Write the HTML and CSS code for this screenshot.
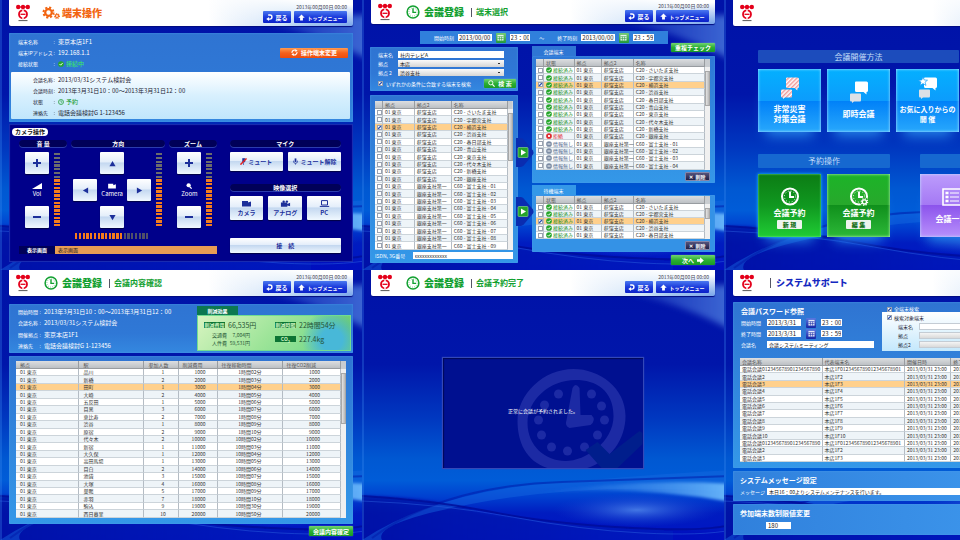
FILE: index.html
```html
<!DOCTYPE html>
<html lang="ja">
<head>
<meta charset="utf-8">
<title>会議予約システム</title>
<link rel="stylesheet" href="styles.css">
</head>
<body>
<svg class="defs" aria-hidden="true">
  <defs>
    <linearGradient id="sky" x1="0" y1="0" x2="0" y2="1">
      <stop offset="0" stop-color="#0012a8"/><stop offset=".35" stop-color="#0016aa"/>
      <stop offset=".55" stop-color="#0038c0"/><stop offset=".7" stop-color="#0058d2"/><stop offset=".78" stop-color="#005cd8"/>
      <stop offset=".84" stop-color="#0040d0"/><stop offset=".9" stop-color="#001cc0"/><stop offset="1" stop-color="#0014c4"/>
    </linearGradient>
    <linearGradient id="beam" x1="0" x2="1"><stop offset="0" stop-color="#2a7ae8" stop-opacity="0"/><stop offset="1" stop-color="#6ab8fa"/></linearGradient>
    <linearGradient id="shade" x1="0" x2="1"><stop offset="0" stop-color="#0010a0" stop-opacity=".8"/><stop offset="1" stop-color="#0012b4" stop-opacity=".2"/></linearGradient>
    <linearGradient id="flare" x1="0" x2="1"><stop offset="0" stop-color="#4a7ee0" stop-opacity="0"/><stop offset="1" stop-color="#5a8ee8" stop-opacity=".7"/></linearGradient>
    <radialGradient id="glow"><stop offset="0" stop-color="#4a80e8" stop-opacity=".9"/><stop offset="1" stop-color="#1040d0" stop-opacity="0"/></radialGradient>
    <filter id="soft"><feGaussianBlur stdDeviation="3"/></filter>
    <filter id="softer"><feGaussianBlur stdDeviation="1.5"/></filter>
  </defs>
  <symbol id="waves" viewBox="0 0 362 270" preserveAspectRatio="none">
    <rect width="362" height="270" fill="url(#sky)"/>
    <path d="M230 18Q300 24 370 60V15Z" fill="url(#flare)" filter="url(#soft)"/>
    <path d="M-6 226Q60 226 110 240T370 262V276H-6Z" fill="url(#shade)" filter="url(#softer)"/>
    <path d="M0 270Q70 224 180 214T370 200V222Q230 212 120 232T20 270Z" fill="#1668e0" opacity=".45"/>
    <path d="M170 224Q270 208 370 214V232Q270 214 170 224Z" fill="url(#beam)" filter="url(#softer)"/>
    <ellipse cx="275" cy="240" rx="84" ry="17" fill="url(#glow)"/>
    <path d="M10 268Q80 216 200 212T370 206" fill="none" stroke="#0018a8" stroke-width="2" opacity=".5"/>
    <path d="M0 226Q70 230 130 242T270 258T370 254" fill="none" stroke="#000c98" stroke-width="2" opacity=".8"/>
    <path d="M0 231Q80 234 150 247T280 263T370 260" fill="none" stroke="#2a60e0" opacity=".5"/>
    <rect width="2" height="270" fill="#3c8cf0" opacity=".3"/>
  </symbol>
  <symbol id="logo" viewBox="0 0 16 18">
    <g fill="#e4001b"><circle cx="3.200" cy="3" r="2.200"/><circle cx="8" cy="3" r="2.200"/><circle cx="12.800" cy="3" r="2.200"/><path d="M3 2.400h10v1.200H3z"/></g>
    <circle cx="8" cy="10.300" r="4" fill="none" stroke="#e4001b" stroke-width="1.800"/>
    <path d="M8 5.400V8.600M8 12V15" stroke="#fff" stroke-width="1.400"/>
    <path d="M5.500 10.300H10.500" stroke="#e4001b" stroke-width="1.300"/>
    <path d="M3.500 16.600h9" stroke="#444" stroke-width=".9"/>
  </symbol>
  <symbol id="gears" viewBox="0 0 18 14">
    <g fill="none" stroke="#f26410"><circle cx="6.500" cy="6.500" r="3.300" stroke-width="2.200"/><circle cx="6.500" cy="6.500" r="5" stroke-width="2" stroke-dasharray="2.100 1.827"/><circle cx="15" cy="10" r="1.500" stroke-width="1.200"/><circle cx="15" cy="10" r="2.400" stroke-width="1.100" stroke-dasharray="1 .885"/></g>
  </symbol>
  <symbol id="clock" viewBox="0 0 14 14">
    <circle cx="7" cy="7" r="5.900" fill="none" stroke="currentColor" stroke-width="1.500"/>
    <circle cx="7" cy="7" r="4.100" fill="none" stroke="currentColor" stroke-width=".7" stroke-dasharray=".7 1.447"/>
    <path d="M7 3.300V7.400H10" fill="none" stroke="currentColor" stroke-width="1.400"/>
  </symbol>
  <symbol id="back" viewBox="0 0 8 8"><path d="M2.500 1.200H4.500A2.300 2.300 0 0 1 4.500 5.800H2.500" fill="none" stroke="#fff" stroke-width="1.600"/><path d="M3.500 3.400V8L.3 5.800Z" fill="#fff"/></symbol>
  <symbol id="up" viewBox="0 0 8 8"><path d="M4 .5 7.700 4.300H5.600V7.500H2.400V4.300H.3Z" fill="#fff"/></symbol>
  <symbol id="ok" viewBox="0 0 8 8"><circle cx="4" cy="4" r="3.800" fill="#26a62c"/><path d="M2 4 3.600 5.600 6.200 2.600" fill="none" stroke="#fff" stroke-width="1.200"/></symbol>
  <symbol id="busy" viewBox="0 0 8 8"><circle cx="4" cy="4" r="3.800" fill="#e0282c"/><path d="M2.600 2.600 5.400 5.400M5.400 2.600 2.600 5.400" stroke="#fff" stroke-width="1.200"/></symbol>
  <symbol id="none" viewBox="0 0 8 8"><circle cx="4" cy="4" r="3.800" fill="#7c8ca4"/><path d="M2 4H6" stroke="#fff" stroke-width="1.200"/></symbol>
  <symbol id="cal" viewBox="0 0 8 8"><path d="M.5 1H7.500V7.500H.5Z" fill="#fff" fill-opacity=".85"/><path d="M.5 3H7.500M.5 5.200H7.500M2.800 3V7.500M5.200 3V7.500" stroke="currentColor" stroke-width=".6"/></symbol>
  <symbol id="cam" viewBox="0 0 10 7"><path d="M.5 1H6.500V2.600L9.500 1.600V6.400H.5Z" fill="currentColor"/></symbol>
  <symbol id="mic" viewBox="0 0 6 8"><path d="M2 .5H4V4.500H2Z" fill="currentColor"/><path d="M.8 3V4.500A2.200 1.500 0 0 0 5.200 4.500V3M3 6V7.600" fill="none" stroke="currentColor" stroke-width=".8"/></symbol>
  <symbol id="bubbles" viewBox="0 0 20 22"><path d="M6 1.500Q6 .5 7 .5H17.500Q19 .5 19 2V9.500Q19 11 17.500 11V13.500L14.500 11H7.500Q6 11 6 9.500Z" fill="var(--a)"/><path d="M1 13.500Q1 12.500 2 12.500H11Q12 12.500 12 13.500V19Q12 20.500 11 20.500H5L3 22V20.500H2Q1 20.500 1 19Z" fill="var(--b)"/></symbol>
</svg>

<main class="gallery">

<section class="screen" aria-label="端末操作">
  <svg class="bg"><use href="#waves"/></svg>
  <header class="top">
    <svg class="logo"><use href="#logo"/></svg>
    <svg class="mark"><use href="#gears"/></svg>
    <h1 class="orange">端末操作</h1>
    <div class="tools"><time>2013年00月00日 00:00</time><nav><button class="blue"><svg><use href="#back"/></svg>戻る</button><button class="blue wide"><svg><use href="#up"/></svg>トップメニュー</button></nav></div>
  </header>
  <div class="panel device">
    <div class="device-head">
      <dl class="facts"><dt>端末名称</dt><dd>東京本店1F1</dd><dt>端末IPアドレス</dt><dd>192.168.1.1</dd><dt>接続状態</dt><dd class="live"><svg class="ico"><use href="#ok"/></svg>接続中</dd></dl>
      <button class="change"><svg viewBox="0 0 8 8"><path d="M1.200 4.500A2.800 2.800 0 0 1 5.500 1.700M6.800 3.500A2.800 2.800 0 0 1 2.500 6.300" fill="none" stroke="#fff" stroke-width="1.300"/><path d="M5 0 7.500 2 5 3.500ZM3 8 .5 6 3 4.500Z" fill="#fff"/></svg>操作端末変更</button>
    </div>
    <dl class="facts light"><dt>会議名称</dt><dd>2013/03/31システム検討会</dd><dt>会議時刻</dt><dd>2013年3月31日10：00～2013年3月31日12：00</dd><dt>状態</dt><dd class="booked"><svg class="ico"><use href="#clock"/></svg>予約</dd><dt>連絡先</dt><dd>電話会議検討G 1-123456</dd></dl>
  </div>
  <div class="camera">
    <h2 class="pill">カメラ操作</h2>
    <div class="camera-grid">
      <div class="group"><h3>音 量</h3>
        <div class="ctl"><div class="stack"><button class="key" aria-label="音量を上げる"><i class="plus"></i></button><span class="cap"><svg viewBox="0 0 10 6"><path d="M0 6 10 0V6Z" fill="#fff"/></svg>Vol</span><button class="key" aria-label="音量を下げる"><i class="minus"></i></button></div><div class="meter"></div></div>
      </div>
      <div class="group"><h3>方向</h3>
        <div class="ctl dir"><div class="cross">
          <button class="key n" aria-label="上"><svg viewBox="0 0 8 8"><path d="M4 1 7.500 7H.5Z"/></svg></button>
          <button class="key w" aria-label="左"><svg viewBox="0 0 8 8"><path d="M1 4 7 .5V7.500Z"/></svg></button>
          <span class="cap c"><svg><use href="#cam"/></svg>Camera</span>
          <button class="key e" aria-label="右"><svg viewBox="0 0 8 8"><path d="M7 4 1 .5V7.500Z"/></svg></button>
          <button class="key s" aria-label="下"><svg viewBox="0 0 8 8"><path d="M4 7 7.500 1H.5Z"/></svg></button>
        </div><div class="meter"></div></div>
        <div class="meter flat"></div>
      </div>
      <div class="group"><h3>ズーム</h3>
        <div class="ctl zoom"><div class="stack"><button class="key" aria-label="ズームイン"><i class="plus"></i></button><span class="cap"><svg viewBox="0 0 10 8"><circle cx="4.500" cy="3" r="2.800" fill="#fff"/><path d="M6 5 8.500 7.500" stroke="#fff" stroke-width="1.600"/></svg>Zoom</span><button class="key" aria-label="ズームアウト"><i class="minus"></i></button></div><div class="meter"></div></div>
      </div>
      <div class="group side"><h3>マイク</h3>
        <div class="pair"><button class="key"><svg class="muted" viewBox="0 0 8 8"><path d="M3 .5H5.500V4.500H3ZM4 5V8" fill="#1c2f9a" stroke="#1c2f9a" stroke-width=".7"/><path d="M.5 7.500 7.500 .5" stroke="#e02020" stroke-width="1.700"/></svg>ミュート</button><button class="key"><svg><use href="#mic"/></svg>ミュート解除</button></div>
        <h3 class="second">映像選択</h3>
        <div class="trio"><button class="key"><svg><use href="#cam"/></svg>カメラ</button><button class="key"><svg viewBox="0 0 12 7"><path d="M1 2.500H8V7H1ZM8 4 11 2.800V6.600L8 5.600Z" fill="currentColor"/><circle cx="4" cy="1.600" r="1.300" fill="currentColor"/><circle cx="7.500" cy="1.400" r="1.300" fill="currentColor"/></svg>アナログ</button><button class="key"><svg class="line" viewBox="0 0 10 7"><path d="M2 .6H8V5H2ZM.3 6.400H9.700" stroke="currentColor"/></svg>PC</button></div>
        <button class="key connect">接　続</button>
      </div>
      <p class="display"><b>表示画面</b><span>表示画面</span></p>
    </div>
  </div>
</section>

<section class="screen" aria-label="端末選択">
  <svg class="bg"><use href="#waves"/></svg>
  <header class="top slim">
    <svg class="logo"><use href="#logo"/></svg>
    <svg class="mark green"><use href="#clock"/></svg>
    <h1 class="green">会議登録</h1><h2 class="sub">端末選択</h2>
    <div class="tools"><time>2013年00月00日 00:00</time><nav><button class="blue"><svg><use href="#back"/></svg>戻る</button><button class="blue wide"><svg><use href="#up"/></svg>トップメニュー</button></nav></div>
  </header>
  <div class="timebar">
    <label for="d1">開始時刻</label><input id="d1" class="date" value="2013/00/00"><button class="cal" aria-label="開始日"><svg><use href="#cal"/></svg></button><input class="hour" aria-label="開始時分" value="23：00">
    <span class="tilde">～</span>
    <label for="d2">終了時刻</label><input id="d2" class="date" value="2013/00/00"><button class="cal" aria-label="終了日"><svg><use href="#cal"/></svg></button><input class="hour" aria-label="終了時分" value="23：59">
  </div>
  <div class="select-grid">
    <div class="left">
      <form class="panel search">
        <label for="s1">端末名</label><input id="s1" value="社内テレビA">
        <label for="s2">拠点</label><select id="s2"><option>本店</option></select>
        <label for="s3">拠点 2</label><select id="s3"><option>渋谷支社</option></select>
        <div class="go"><label><input type="checkbox" checked>いずれかの条件に合致する端末を検索</label><button type="button" class="grn"><svg viewBox="0 0 8 8"><circle cx="3.200" cy="3.200" r="2.400" fill="none" stroke="#fff"/><path d="M5 5 7.500 7.500" stroke="#fff" stroke-width="1.400"/></svg>検 索</button></div>
      </form>
      <div class="panel sites">
        <div class="list h19"><table id="sites"></table><div class="bar"><i></i></div></div>
        <div class="isdn"><label for="isdn">ISDN, 3G番号</label><input id="isdn" value="xxxxxxxxxxxxx"></div>
      </div>
    </div>
    <div class="moves">
      <button aria-label="会議端末に追加"><svg viewBox="0 0 18 29"><path d="M0 0H5Q7 0 9 3L17 12.500Q18 14.500 17 16.500L9 26Q7 29 5 29H0Z" fill="#0a2cb0"/><rect x="2" y="9.500" width="10" height="10" rx="1" fill="#25a32b" stroke="#8fdf8f" stroke-width=".6"/><path d="M5 11.500 10 14.500 5 17.500Z" fill="#fff"/></svg></button>
      <button aria-label="待機端末に追加"><svg viewBox="0 0 18 29"><path d="M0 0H5Q7 0 9 3L17 12.500Q18 14.500 17 16.500L9 26Q7 29 5 29H0Z" fill="#0a2cb0"/><rect x="2" y="9.500" width="10" height="10" rx="1" fill="#25a32b" stroke="#8fdf8f" stroke-width=".6"/><path d="M5 11.500 10 14.500 5 17.500Z" fill="#fff"/></svg></button>
    </div>
    <div class="right">
      <div class="tabs"><h3>会議端末</h3><button class="grn">重複チェック</button></div>
      <div class="panel box"><div class="list h14"><table id="meeting"></table><div class="bar"><i></i></div></div><button class="del"><b>✕</b>削除</button></div>
      <div class="tabs low"><h3>待機端末</h3></div>
      <div class="panel box"><div class="list h5"><table id="standby"></table><div class="bar"><i></i></div></div><button class="del"><b>✕</b>削除</button></div>
      <button class="grn next">次へ<svg viewBox="0 0 8 8"><path d="M0 2.500H3.500V.3L7.800 4 3.500 7.700V5.500H0Z" fill="#fff"/></svg></button>
    </div>
  </div>
</section>

<section class="screen cut" aria-label="メニュー">
  <svg class="bg"><use href="#waves"/></svg>
  <header class="top"><svg class="logo"><use href="#logo"/></svg></header>
  <div class="menu">
    <h2>会議開催方法</h2>
    <div class="tiles">
      <button class="tile two"><svg class="pink" viewBox="0 0 20 22"><defs><pattern id="st" width="3" height="3" patternUnits="userSpaceOnUse" patternTransform="rotate(45)"><rect width="3" height="3" fill="#fff"/><rect width="1.500" height="3" fill="#f09c9c"/></pattern></defs><use href="#bubbles"/></svg>非常災害<br>対策会議</button>
      <button class="tile"><svg><use href="#bubbles"/></svg>即時会議</button>
      <button class="tile two fav"><svg viewBox="0 0 20 22"><use href="#bubbles"/><path d="M5 0 6.300 3 9.500 3.200 7 5.200 8 8.400 5 6.600 2 8.400 3 5.200.5 3.200 3.700 3Z" fill="#fff" stroke="#139cf8" stroke-width=".7"/></svg>お気に入りからの<br>開 催</button>
    </div>
    <div class="menu-row">
      <div><h2 class="mid">予約操作</h2>
        <div class="tiles">
          <button class="tile g1"><svg><use href="#clock"/></svg>会議予約<b>新 規</b></button>
          <button class="tile g2"><svg viewBox="0 0 14 14"><use href="#clock"/><circle cx="11" cy="11" r="2.300" fill="#2aa42c" stroke="#2aa42c" stroke-width="2"/><circle cx="11" cy="11" r="1.500" fill="none" stroke="#fff"/><circle cx="11" cy="11" r="2.300" fill="none" stroke="#fff" stroke-dasharray=".9 .9"/></svg>会議予約<b>編 集</b></button>
        </div>
      </div>
      <div><h2 class="mid"></h2>
        <div class="tiles"><button class="tile violet"><svg viewBox="0 0 20 18"><path d="M1 1H19V17H1Z" fill="none" stroke="#fff" stroke-width="1.600"/><path d="M3.500 5H6.500M3.500 9H6.500M3.500 13H6.500" stroke="#fff" stroke-width="2.400"/><path d="M8 5H17M8 9H17M8 13H17" stroke="#fff"/></svg>会議一覧</button></div>
      </div>
    </div>
  </div>
</section>

<section class="screen" aria-label="会議内容確認">
  <svg class="bg"><use href="#waves"/></svg>
  <header class="top">
    <svg class="logo"><use href="#logo"/></svg>
    <svg class="mark green"><use href="#clock"/></svg>
    <h1 class="green">会議登録</h1><h2 class="sub">会議内容確認</h2>
    <div class="tools"><time>2013年00月00日 00:00</time><nav><button class="blue"><svg><use href="#back"/></svg>戻る</button><button class="blue wide"><svg><use href="#up"/></svg>トップメニュー</button></nav></div>
  </header>
  <div class="panel summary">
    <dl class="facts tight"><dt>開始時間</dt><dd>2013年3月31日10：00～2013年3月31日12：00</dd><dt>会議名称</dt><dd>2013/03/31システム検討会</dd><dt>開催拠点</dt><dd>東京本店1F1</dd><dt>連絡先</dt><dd>電話会議検討G 1-123456</dd></dl>
    <div class="eco">
      <h3>削減効果</h3>
      <div class="eco-box">
        <div><p class="big"><b>削減費用</b>66,535円</p><p class="small"><i>交通費</i>7,004円</p><p class="small"><i>人件費</i>59,531円</p></div>
        <div><p class="big"><b>削減時間</b>22時間54分</p><p class="big"><b>CO<sub>2</sub></b>227.4kg</p></div>
      </div>
    </div>
  </div>
  <div class="panel result"><div class="list h20"><table id="result"></table><div class="bar"><i></i></div></div></div>
  <button class="grn confirm">会議内容確定</button>
</section>

<section class="screen" aria-label="会議予約完了">
  <svg class="bg"><use href="#waves"/></svg>
  <header class="top">
    <svg class="logo"><use href="#logo"/></svg>
    <svg class="mark green"><use href="#clock"/></svg>
    <h1 class="green">会議登録</h1><h2 class="sub">会議予約完了</h2>
    <div class="tools"><time>2013年00月00日 00:00</time><nav><button class="blue"><svg><use href="#back"/></svg>戻る</button><button class="blue wide"><svg><use href="#up"/></svg>トップメニュー</button></nav></div>
  </header>
  <div class="notice">
    <svg viewBox="0 0 201 110" preserveAspectRatio="xMaxYMid slice">
      <g fill="#1c2aa4"><path fill-rule="evenodd" d="M132 11C158 11 184 30 184 58S162 113 126 113 76 90 76 63 102 11 132 11ZM134 22C108 22 86 42 86 65S104 103 124 103 172 84 172 58 154 22 134 22Z"/>
      <path d="M131 30Q134 24 138 30L139 57H150Q155 62 149 67L128 70Q123 68 125 62Z"/>
      <circle cx="117" cy="36" r="4.500"/><circle cx="150" cy="36" r="4.500"/><circle cx="103" cy="47" r="4.500"/><circle cx="160" cy="48" r="4.500"/><circle cx="97" cy="62" r="4.500"/><circle cx="163" cy="62" r="4.500"/><circle cx="100" cy="77" r="4.500"/><circle cx="156" cy="77" r="4.500"/><circle cx="110" cy="89" r="4.500"/><circle cx="143" cy="89" r="4.500"/><circle cx="126" cy="93" r="4.500"/></g>
      <path d="M144 92 156 84 168 96 198 73 201 75V86L176 110H160Z" fill="#001e8c"/>
    </svg>
    <p>正常に会議が予約されました。</p>
  </div>
</section>

<section class="screen cut" aria-label="システムサポート">
  <svg class="bg"><use href="#waves"/></svg>
  <header class="top"><svg class="logo"><use href="#logo"/></svg><h1 class="support">システムサポート</h1></header>
  <div class="panel pass">
    <div class="pass-top">
      <div class="pass-form">
        <h2>会議パスワード参照</h2>
        <div class="row"><label for="p1">開始時間</label><input id="p1" class="date" value="2013/3/31"><button class="cal navy" aria-label="開始日"><svg><use href="#cal"/></svg></button><input class="hour" aria-label="開始時分" value="23：00"></div>
        <div class="row"><label for="p2">終了時間</label><input id="p2" class="date" value="2013/3/31"><button class="cal navy" aria-label="終了日"><svg><use href="#cal"/></svg></button><input class="hour" aria-label="終了時分" value="23：59"></div>
        <div class="row"><label for="p3">会議名</label><input id="p3" class="name" value="会議システムミーティング"></div>
      </div>
      <div class="pass-scope">
        <label><input type="checkbox" checked>全端末検索</label>
        <div class="scope">
          <label class="whole"><input type="checkbox" checked>検索対象端末</label>
          <label for="q1">端末名</label><input id="q1">
          <label for="q2">拠点</label><select id="q2"><option></option></select>
          <label for="q3">拠点2</label><select id="q3"><option></option></select>
        </div>
      </div>
    </div>
    <div class="list h13"><table id="pass"></table></div>
  </div>
  <div class="panel msg"><h2>システムメッセージ設定</h2><div class="row"><label for="m1">メッセージ</label><input id="m1" value="本日16：00よりシステムメンテナンスを行います。"></div></div>
  <div class="panel limit"><h2>参加端末数制限値変更</h2><input aria-label="参加端末数制限値" value="180"></div>
</section>

</main>
<script src="tables.js"></script>
</body>
</html>
```
FILE: styles.css
```css
* { box-sizing: border-box; }
body { margin: 0; background: #0014a8; color: #fff; font: 5px/7px "Noto Sans CJK JP", "Liberation Sans", sans-serif; }
h1, h2, h3, p, dl, dd { margin: 0; }
svg { display: block; flex: none; }
i, b { font-style: normal; }
button, input, select { font: inherit; margin: 0; padding: 0; border: 0; border-radius: 0; }
button { display: flex; align-items: center; justify-content: center; color: #fff; white-space: nowrap; }
label { white-space: nowrap; }
.defs { position: absolute; width: 0; height: 0; }

.gallery { display: grid; grid-template-columns: minmax(0, 362fr) minmax(0, 362fr) minmax(0, 236fr); grid-auto-rows: minmax(50vh, auto); min-height: 100vh; }
.screen { position: relative; isolation: isolate; padding: 0 9px; overflow: hidden; }
.screen.cut { display: grid; grid-template-columns: minmax(344px, 1fr); align-content: start; }
.bg { position: absolute; inset: 0; width: 100%; height: 100%; z-index: -1; }
.cut .bg { min-width: 362px; }

.top { display: flex; align-items: center; height: 26px; padding: 0 6px; border-radius: 0 0 2px 2px; background: radial-gradient(ellipse 70px 24px at 100% 110%, #6c9ce8, rgba(108, 156, 232, 0)), linear-gradient(8deg, rgba(255, 255, 255, 0) 45%, #fff 90%), linear-gradient(90deg, #fff 58%, #dceafa 72%, #a4ccf0 88%, #d8eafa); box-shadow: 0 1px 1px #000c80; }
.top.slim { height: 24px; }
.logo { width: 16px; height: 18px; margin-right: 11px; }
.mark { width: 18px; height: 14px; margin-right: 2px; }
.green { color: #12a030; }
.orange { color: #f26410; }
h1 { font-size: 10px; line-height: 14px; font-weight: 900; white-space: nowrap; }
.sub { display: flex; align-items: center; margin-left: 7px; color: #12a030; font-size: 8px; line-height: 12px; white-space: nowrap; }
.sub::before { content: ""; width: 1px; height: 9px; margin-right: 4px; background: #556; }
.support { display: flex; align-items: center; margin-left: 4px; color: #1428c0; font-size: 9px; }
.support::before { content: ""; width: 1px; height: 10px; margin-right: 5px; background: #556; }
.tools { display: grid; justify-items: end; gap: 1px; margin-left: auto; color: #445; }
.tools time { line-height: 7px; }
.tools nav { display: flex; gap: 3px; }
.blue { width: 28px; height: 12px; gap: 2px; border-radius: 1px; background: linear-gradient(#4a78f0, #1c3cdc 50%, #0a20c8); font-size: 6px; font-weight: 700; }
.blue.wide { width: 53px; font-size: 5px; }
.blue svg { width: 7px; height: 7px; }

.panel { border-radius: 1px; background: linear-gradient(#2f74d2, #2f78d6 60%, #3488e0); box-shadow: inset 0 0 2px #4c9cec; }
.facts { display: grid; grid-template-columns: 40px 1fr; line-height: 11px; white-space: nowrap; }
.facts dt { display: flex; justify-content: space-between; }
.facts dt::after { content: ":"; padding-right: 3px; opacity: .7; }
.facts dd { display: flex; align-items: center; gap: 2px; font-size: 6px; }
.ico { width: 6px; height: 6px; }
.device { margin-top: 7px; padding: 3px 3px 3px 2px; }
.device-head { display: flex; align-items: center; justify-content: space-between; min-height: 36px; padding: 0 2px 3px 7px; }
.live { color: #3cf05c; }
.booked { color: #0c9420; }
.change { width: 68px; height: 10px; gap: 3px; border-radius: 1px; background: linear-gradient(#ff9a50, #f4601c 50%, #ee4c0c); font-size: 6px; font-weight: 700; }
.change svg { width: 7px; height: 7px; }
.light { grid-template-columns: 25px 1fr; padding: 2px 22px; border-radius: 1px; background: linear-gradient(#fff, #d8f0fe 50%, #c0e6fc); color: #223; }
.device .light { height: 47px; }

.camera { margin-top: 2px; padding: 4px 12px 8px 3px; background: #00008a; box-shadow: inset 0 0 1px 1px #1c30b4; height: 138px; }
.pill { width: 36px; border-radius: 4px; background: #fff; color: #111; font-size: 6px; line-height: 8px; text-align: center; white-space: nowrap; }
.camera-grid { display: grid; grid-template-columns: 48fr 94fr 47fr 120fr; column-gap: 4px; margin: 4px 0 0 7px; }
.group h3 { height: 8px; border-radius: 4px; background: #000058; box-shadow: inset 0 -1px #2c3cae; font-size: 6px; line-height: 7px; text-align: center; }
.ctl { display: flex; gap: 5px; height: 76px; margin-top: 4px; padding-left: 6px; }
.ctl.dir { padding-left: 2px; }
.ctl.zoom { padding-left: 8px; }
.stack { display: grid; grid-template-rows: repeat(3, 22px); width: 24px; gap: 5px; }
.cross { display: grid; grid-template: ". n ." 22px "w c e" 22px ". s ." 22px / 24px 24px 24px; gap: 5px 3px; }
.n { grid-area: n; } .w { grid-area: w; } .c { grid-area: c; } .e { grid-area: e; } .s { grid-area: s; }
.key { border-radius: 1px; background: linear-gradient(#fff, #e4eefa 45%, #c4d8f0 50%, #f0f8ff); color: #1c2f9a; font-size: 6px; font-weight: 700; box-shadow: 0 1px 1px #000044; }
.key svg { width: 7px; height: 7px; fill: #1c2f9a; }
.key svg.line { fill: none; }
.plus, .minus { width: 8px; height: 8px; background: linear-gradient(#1c2f9a, #1c2f9a) center / 8px 2px no-repeat; }
.plus { background: linear-gradient(#1c2f9a, #1c2f9a) center / 8px 2px no-repeat, linear-gradient(#1c2f9a, #1c2f9a) center / 2px 8px no-repeat; }
.cap { display: flex; flex-direction: column; align-items: center; justify-content: center; gap: 1px; font-size: 6px; line-height: 8px; }
.cap svg { width: 10px; height: 6px; }
.meter { width: 6px; height: 75px; margin-top: 1px; background: repeating-linear-gradient(transparent 0 3%, #00008a 3% 5%), linear-gradient(#6c6c6c 35%, #f47c1c 35%); }
.meter.flat { width: 75px; height: 6px; margin: 5px 0 0 4px; background: repeating-linear-gradient(90deg, transparent 0 3%, #00008a 3% 5%), linear-gradient(90deg, #f47c1c 65%, #505068 65%); }
.side { grid-column: 4; grid-row: 1 / span 2; margin-left: 9px; }
.pair, .trio { display: grid; grid-auto-flow: column; grid-auto-columns: 1fr; gap: 5px; }
.pair { margin-top: 4px; }
.pair .key { height: 19px; gap: 1px; }
.second { margin-top: 13px; }
.trio { margin-top: 4px; }
.trio .key { flex-direction: column; height: 24px; gap: 2px; line-height: 8px; }
.trio svg { width: 11px; }
.connect { width: 100%; height: 15px; margin-top: 18px; }
.display { display: flex; grid-column: 1 / 4; margin: 7px 0 0; height: 8px; font-size: 5px; line-height: 8px; }
.display b { width: 36px; padding-left: 8px; background: #000058; }
.display span { flex: 1; padding-left: 3px; background: #e89c54; color: #222; }

input, select { height: 7px; padding: 0 2px; background: #fff; color: #222; line-height: 7px; min-width: 0; }
select { appearance: none; background: linear-gradient(#333, #333) right 4px center / 2px 1px no-repeat, linear-gradient(#fafafa, #d4d4d4); }
input[type="checkbox"] { appearance: none; flex: none; width: 5px; height: 5px; padding: 0; border: 1px solid #9aa2b0; background: #fff; }
input[type="checkbox"]:checked { background: linear-gradient(135deg, #fff 20%, #2c50b0 50%, #fff 80%); }
.date, .hour { font-size: 6px; }
.date { width: 34px; padding: 0 1px; }
.hour { width: 21px; padding: 0 1px; }
.cal { width: 10px; height: 10px; border-radius: 1px; background: linear-gradient(#74cc74, #219838); color: #219838; }
.cal.navy { background: linear-gradient(#5878e0, #1424a4); color: #1424a4; }
.cal svg { width: 7px; height: 7px; }
.grn { height: 9px; gap: 3px; border-radius: 1px; background: linear-gradient(#70d470, #2cae34 50%, #189c24); box-shadow: 0 0 1px #c0f0c0; font-size: 6px; font-weight: 700; }
.grn svg { width: 7px; height: 7px; }

.timebar { display: flex; align-items: center; gap: 4px; width: 72%; height: 13px; margin: 7px auto 0 49px; padding: 0 14px; background: #3080dc; }
.timebar .tilde { margin: 0 9px 0 5px; }
.select-grid { display: grid; grid-template-columns: 148fr 14px 184fr; margin: -1px 0 0 -1px; }
.left { padding-top: 4px; }
.search { display: grid; grid-template-columns: 20px 106px; align-items: center; gap: 2px 0; height: 44px; padding: 4px 0 3px 8px; align-content: start; }
.go { display: flex; align-items: center; justify-content: space-between; grid-column: 1 / 3; width: 138px; }
.go label { display: flex; align-items: center; gap: 3px; }
.go .grn { width: 32px; margin-top: 1px; }
.sites { margin-top: 4px; padding: 6px 5px 4px; background: linear-gradient(#2f74d2, #3498e8); }
.isdn { display: flex; justify-content: space-between; margin-top: 2px; }
.isdn input { width: 100px; }
.moves { display: grid; align-content: start; gap: 30px; padding-top: 95px; }
.moves button { width: 18px; height: 29px; margin-left: -2px; background: none; z-index: 1; }
.moves svg { width: 18px; height: 29px; }
.tabs { display: flex; align-items: end; justify-content: space-between; height: 13px; }
.tabs h3 { width: 44px; height: 10px; background: #2f76d4; font-size: 5px; line-height: 11px; font-weight: 400; text-align: center; }
.tabs .grn { align-self: start; width: 44px; }
.tabs.low { height: 12px; }
.tabs.low h3 { background: #3498e8; }
.box { padding: 3px 5px 2px 4px; background: linear-gradient(#2f78d6, #3498e8); }
.low + .box { padding-top: 1px; background: #3492e6; }
.del { width: 25px; height: 9px; gap: 2px; margin: 2px 0 0 auto; border: 1px solid #8484a8; border-radius: 1px; background: linear-gradient(#54547c, #202048); font-weight: 700; }
.next { width: 44px; height: 10px; margin: 3px 0 0 auto; }

.list { display: flex; background: linear-gradient(#c8ccd0, #c8ccd0) top / 100% 8px no-repeat, #fff; color: #333; }
.list table { flex: 1; width: 0; height: 100%; table-layout: fixed; border-collapse: separate; border-spacing: 0; }
.list th, .list td { padding: 0 0 0 2px; border-right: 1px solid #b4bcc4; border-bottom: 1px solid #ccd4da; line-height: 6px; text-align: left; font-weight: 400; white-space: nowrap; }
.list th { height: 8px; background: linear-gradient(#dcdee0, #bcc0c4); border-color: #989ca0; color: #555; }
.list tbody tr:nth-child(even) td { background: #eef4f8; }
.list tbody tr.on td { background: #ffd08c; }
.list td input { display: block; }
#result th, #result td { padding-left: 4px; }
#result td.num { text-align: right; padding-right: 11px; }
#result td.far { padding-right: 20px; }
#result td.mid { text-align: center; }
.state { display: flex; align-items: center; gap: 1px; }
.st-ok { color: #128c20; } .st-busy { color: #e02024; } .st-none { color: #50648c; }
.bar { width: 5px; margin-top: 8px; padding-top: 4px; background: #f0f0f0; }
.bar i { display: block; height: 35%; background: linear-gradient(90deg, #e4e4e4, #b8b8b8); border: 1px solid #a8a8a8; }
.h19 { height: 149px; } .h14 { height: 111px; } .h5 { height: 43px; } .h20 { height: 157px; } .h13 { height: 104px; }

.menu { width: 100%; padding: 24px 0 0 25px; }
.menu h2 { width: 201px; height: 13px; border-radius: 1px; background: #1c4cbc; color: #c4dcf8; font-size: 8px; line-height: 13px; font-weight: 400; text-align: center; }
.menu h2.mid { width: 132px; height: 14px; background: #1668d0; }
.tiles { display: flex; gap: 6px; margin-top: 6px; }
.tile { flex-direction: column; width: 63px; height: 63px; --a: #fff; --b: #dce0e6; background: linear-gradient(#04b0ff, #0c9cfc 50%, #0080f8 50%, #28a8fc); box-shadow: inset 0 0 3px #c0ecff, 0 12px 12px -8px #2484e8; font-size: 8px; line-height: 12px; font-weight: 700; }
.tile svg { width: 20px; height: 22px; margin-bottom: 5px; }
.tile.two { line-height: 10px; }
.tile.fav { font-size: 7px; }
.pink { --a: url(#st); --b: url(#st); }
.menu-row { display: flex; gap: 30px; margin-top: 22px; }
.tile.g1 { background: linear-gradient(#0c7c14, #109820 50%, #20cc34); box-shadow: inset 0 0 2px #90f8a8, 0 0 3px #18c8f8, 0 12px 12px -8px #2484e8; }
.tile.g2 { background: linear-gradient(#1cb428, #28a82c 50%, #10901c 50%, #2cb838); box-shadow: inset 0 0 3px #d0ffd0, 0 12px 12px -8px #2484e8; }
.tile.violet { background: linear-gradient(#bc9cfc, #a478f4 50%, #8c54ec 50%, #b890fc); }
.g1 svg, .g2 svg { height: 19px; margin: 5px 0 1px; }
.tile b { width: 25px; margin-top: 1px; border-radius: 1px; background: #eef4ee; color: #187020; font-size: 6px; line-height: 9px; }

.summary { display: flex; justify-content: space-between; margin-top: 8px; padding: 2px 2px 2px 9px; height: 49px; }
.facts.tight { grid-template-columns: 26px 1fr; }
.eco { width: 154px; }
.eco h3 { width: 41px; background: #0c7850; font-size: 5px; line-height: 9px; text-align: center; }
.eco-box { display: grid; grid-template-columns: 71px 1fr; height: 36px; padding: 3px 0 0 6px; border: 1px solid #70dc90; background: radial-gradient(circle at 88% 70%, #48b8d8 8%, transparent 22%), radial-gradient(circle at 98% 40%, #70cc60, transparent 25%), linear-gradient(135deg, #d8f4c0, #9ce498 50%, #68d484); color: #245434; }
.big { display: flex; align-items: center; gap: 3px; font-size: 7px; line-height: 12px; white-space: nowrap; }
.big b { width: 21px; background: #0c7434; color: #d0f4c0; font-size: 5px; line-height: 6px; text-align: center; }
.big sub { font-size: 4px; line-height: 0; }
.big + .big { margin-top: 2px; }
.small { display: flex; width: 46px; justify-content: space-between; padding-left: 8px; line-height: 8px; white-space: nowrap; }
.result { margin-top: 3px; padding: 5px 7px 6px; background: linear-gradient(#2f74d2, #3498e8); }
.confirm { width: 44px; height: 10px; margin: 2px 0 0 auto; }

.notice { position: relative; display: grid; place-items: center; width: 58%; height: 110px; margin: 62px auto 0; background: #001090; box-shadow: inset 1px 1px 1px #000858, 0 0 1px 1px #3448b8; }
.notice svg { position: absolute; inset: 0; width: 100%; height: 100%; }
.notice p { position: relative; margin-bottom: 6px; }

.pass { margin-top: 6px; padding: 4px 7px 6px; background: linear-gradient(#2f74d2, #3498e8); }
.pass-top { display: flex; height: 52px; }
.pass h2, .msg h2, .limit h2 { font-size: 7px; line-height: 11px; white-space: nowrap; }
.row { display: flex; align-items: center; gap: 5px; height: 11px; }
.row label { width: 21px; }
.row .name { width: 107px; }
.pass-form { width: 142px; flex: none; padding-left: 1px; }
.pass-scope { flex: 1; }
.pass-scope > label, .scope .whole { display: flex; align-items: center; gap: 2px; height: 6px; }
.pass-scope > label { padding-left: 5px; line-height: 6px; }
.scope { display: grid; grid-template-columns: 32px 1fr; align-items: center; align-content: start; gap: 2px 0; height: 39px; padding: 2px 0 0 5px; background: linear-gradient(#fff, #c4e8fc); color: #223; }
.scope .whole { grid-column: 1 / 3; height: 7px; }
.scope label:not(.whole) { padding-left: 11px; }
.scope select, .scope input:not([type]) { box-shadow: inset 0 0 0 1px #c4ccd4; }
.msg, .limit { margin-top: 3px; padding: 4px 7px; background: linear-gradient(90deg, #3080dc, #409cf0); }
.msg { height: 30px; }
.msg .row label { width: 22px; }
.msg .row input { flex: 1; }
.limit { height: 31px; }
.limit input { display: block; width: 25px; margin: 3px 0 0 26px; font-size: 6px; }
```
FILE: tables.js
```js
const icon = (name) => `<svg class="ico"><use href="#${name}"/></svg>`;
const tick = (on) => `<input type="checkbox" aria-label="選択"${on ? " checked" : ""}>`;

function fill(id, widths, heads, rows, classes = []) {
  const cols = widths.map((w) => `<col style="width:${w}%">`).join("");
  const head = heads.map((h) => `<th>${h}</th>`).join("");
  const body = rows.map((r, i) => {
    const cells = r.map((c, k) => `<td class="${classes[k] || ""}">${c}</td>`).join("");
    return `<tr class="${i === 2 ? "on" : ""}">${cells}</tr>`;
  }).join("");
  document.getElementById(id).innerHTML =
    `<colgroup>${cols}</colgroup><thead><tr>${head}</tr></thead><tbody>${body}</tbody>`;
}

const branches = ["さいたま支社", "宇都宮支社", "横浜支社", "渋谷支社", "春日部支社", "青山支社", "東京支社", "代々木支社", "新橋支社", "銀座支社"];
const site = (i) => i < 10
  ? ["01 東京", "荻窪支店", `C20 - ${branches[i]}`]
  : ["01 東京", "銀座支社第一", `C60 - 富士支社 - 0${i - 9}`];

fill("sites", [6, 24, 28, 42], ["", "拠点", "拠点2", "名称"],
  Array.from({ length: 19 }, (_, i) => [tick(i === 2), ...site(i)]));

const state = (i) => i < 9 ? `<span class="state st-ok">${icon("ok")}接続済み</span>`
  : i === 9 ? `<span class="state st-busy">${icon("busy")}拒絶</span>`
  : `<span class="state st-none">${icon("none")}情報無し</span>`;
const terminals = (n) => Array.from({ length: n }, (_, i) => [tick(i === 2), state(i), ...site(i)]);
const terminalHeads = ["", "状態", "拠点", "拠点2", "名称"];
fill("meeting", [5, 18, 16, 19, 42], terminalHeads, terminals(14));
fill("standby", [5, 18, 16, 19, 42], terminalHeads, terminals(5));

const stations = ["品川", "新橋", "田町", "大崎", "五反田", "目黒", "恵比寿", "渋谷", "原宿", "代々木", "新宿", "大久保", "高田馬場", "目白", "池袋", "大塚", "巣鴨", "赤羽", "駒込", "西日暮里"];
const people = [1, 2, 1, 2, 1, 3, 2, 1, 2, 2, 1, 1, 1, 2, 3, 4, 5, 7, 9, 10];
const times = ["1時間02分", "1時間03分", "1時間04分", "1時間05分", "1時間06分", "1時間07分", "1時間08分", "1時間09分", "1時間10分", "10時間02分", "10時間03分", "10時間04分", "10時間05分", "10時間06分", "10時間07分", "10時間08分", "10時間09分", "10時間10分", "10時間30分", "10時間50分"];
fill("result", [19.5, 20, 10.5, 12, 20, 18], ["拠点", "駅", "参加人数", "削減費用", "往復移動時間", "往復CO2削減"],
  stations.map((s, i) => ["01 東京", s, people[i], (i + 1) * 1000, times[i], (i + 1) * 1000]),
  ["", "", "mid", "num", "num far", "num far"]);

const long = "01234567890123456789";
const passRows = [1, 2, 3, 4, 5, 6, 7, 8, 9, 10, 1, 2, 3].map((n) => [
  n === 1 ? `電話会議${long}0` : `電話会議${n}`,
  n === 1 ? `本店1F${long}01` : `本店1F${n}`,
  "2013/03/31 23:00", "2013/03/31 23:59", ""]);
fill("pass", [25, 25, 14, 14, 22], ["会議名称", "代表端末名", "開催日時", "終了日時", ""], passRows);
```
